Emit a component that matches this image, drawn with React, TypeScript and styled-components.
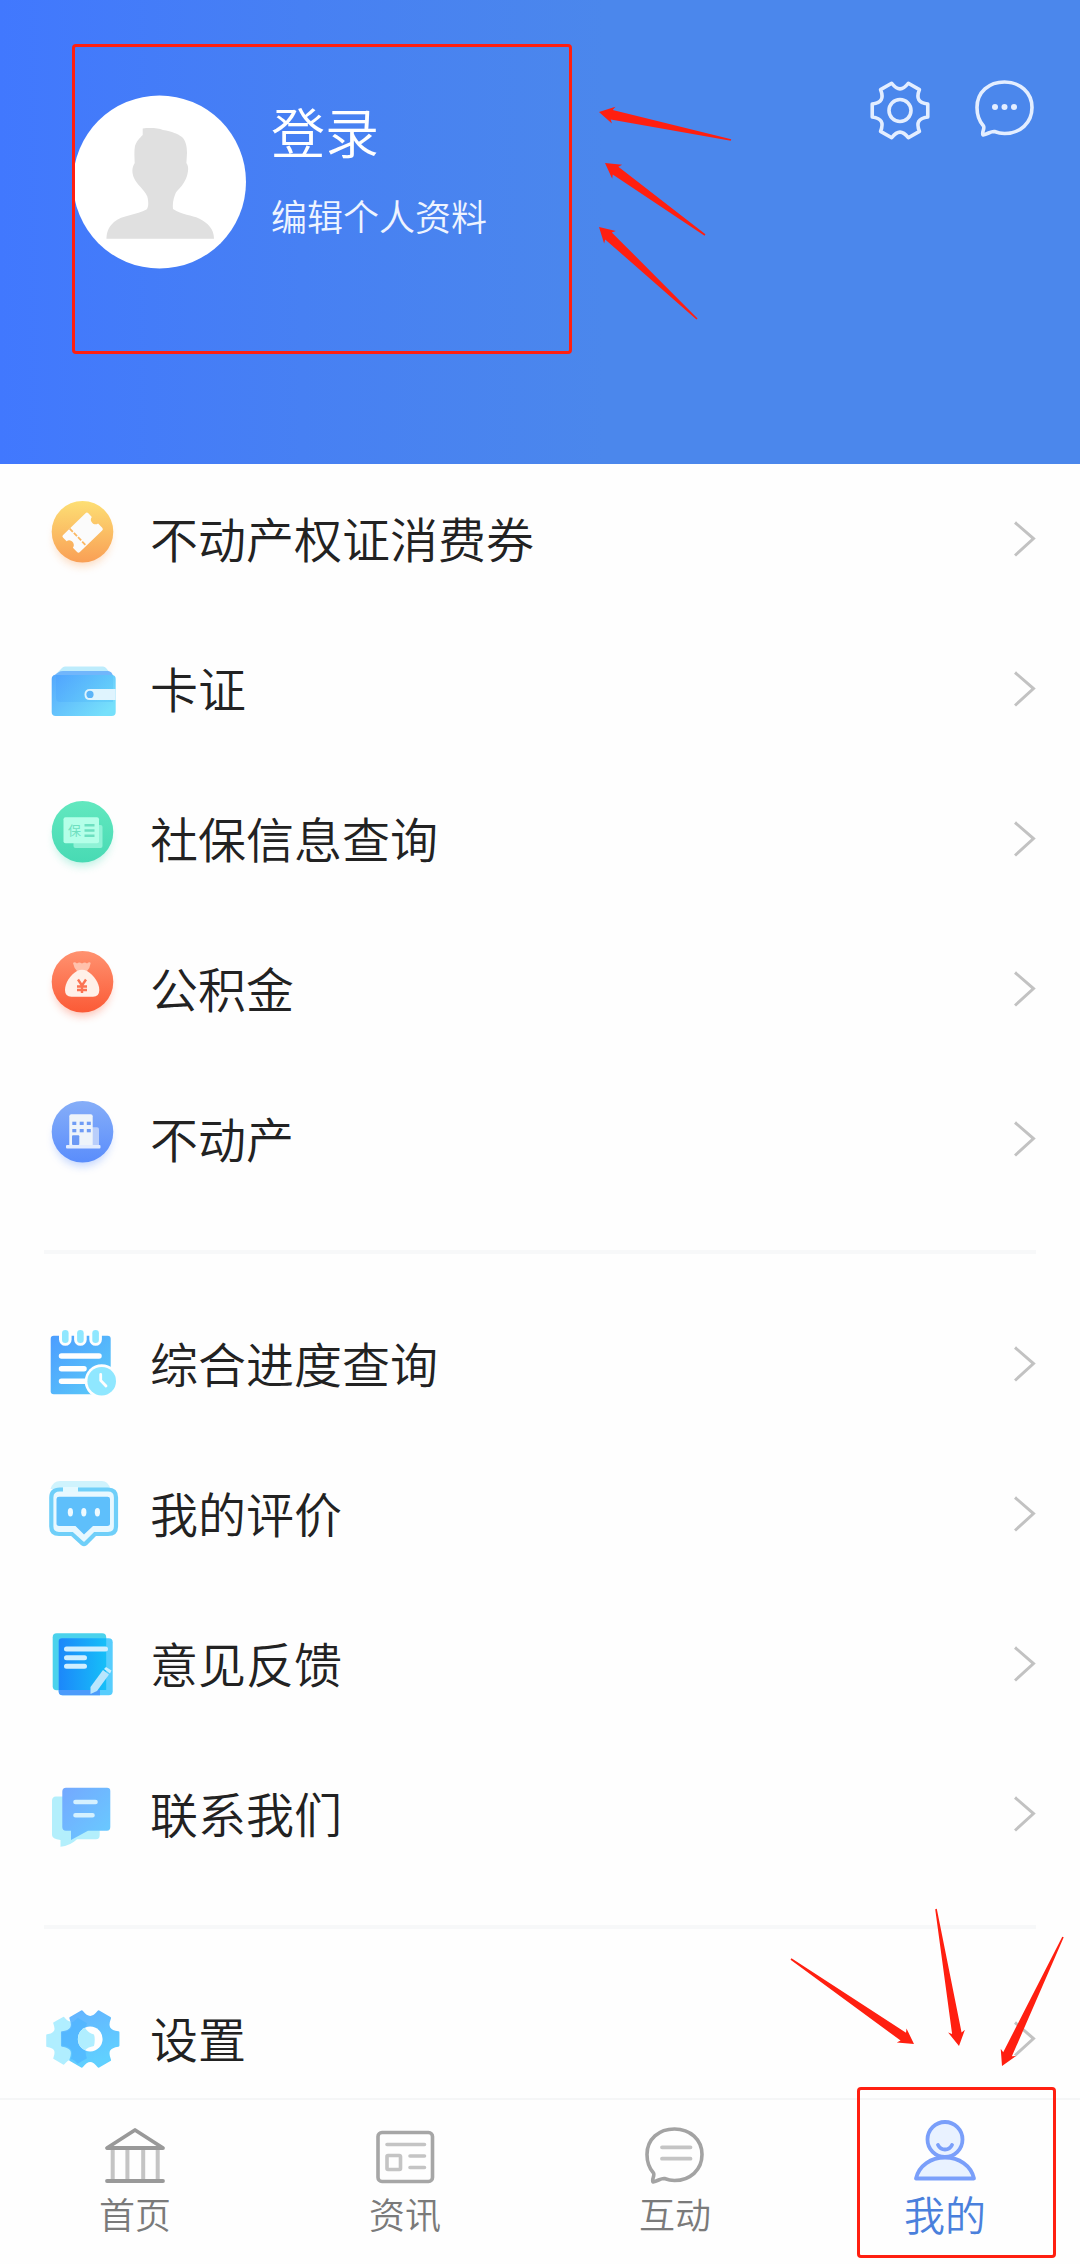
import React from "react";
import styled, { createGlobalStyle } from "styled-components";

const RED = "#ff1f10";

const GlobalStyle = createGlobalStyle`
  *, *::before, *::after { box-sizing: border-box; }
  body {
    margin: 0;
    background: #fefefe;
    font-family: "Noto Sans CJK SC", "Noto Sans", sans-serif;
    font-weight: 350;
  }
`;

const Page = styled.div`
  display: flex;
  flex-direction: column;
  height: 100vh;
  overflow: hidden;
`;

const Scroll = styled.main`
  flex: 1;
  min-height: 0;
  overflow-y: auto;
  scrollbar-width: none;
`;

const Header = styled.header`
  position: relative;
  display: flex;
  justify-content: space-between;
  align-items: flex-start;
  height: 464px;
  padding: 80px 44px 0 73px;
  background: linear-gradient(90deg, #4178fe 0%, #4780f3 28%, #4b87ec 56%, #4b87ec 100%);
`;

const ProfileButton = styled.button`
  display: flex;
  align-items: flex-start;
  gap: 24px;
  margin-top: 15px;
  padding: 0;
  border: 0;
  background: none;
  color: #fff;
  font: inherit;
  text-align: left;
`;

const ProfileText = styled.span`
  display: flex;
  flex-direction: column;
  gap: 28px;
  padding-top: 4px;
`;

const ProfileName = styled.span`
  font-size: 54px;
  line-height: 64px;
`;

const ProfileHint = styled.span`
  font-size: 36px;
  line-height: 48px;
  color: #eef4ff;
`;

const Actions = styled.div`
  display: flex;
  gap: 40px;
`;

const IconButton = styled.button`
  display: flex;
  padding: 0;
  border: 0;
  background: none;
`;

const Frame = styled.span<{ $place: "profile" | "tab" }>`
  position: absolute;
  border: 3px solid ${RED};
  border-radius: 4px;
  pointer-events: none;
  ${(p) =>
    p.$place === "profile"
      ? "left: 72px; top: 44px; width: 500px; height: 310px;"
      : "right: 24px; bottom: 6px; width: 199px; height: 171px;"}
`;

const Arrows = styled.svg<{ $place: "profile" | "tab" }>`
  position: absolute;
  pointer-events: none;
  ${(p) =>
    p.$place === "profile" ? "left: 580px; top: 100px;" : "right: 0; bottom: 184px;"}
`;

const Group = styled.ul`
  list-style: none;
  margin: 0 44px;
  padding: 0;
  & + & {
    margin-top: 35px;
    padding-top: 36px;
    border-top: 4px solid #f7f8f9;
  }
`;

const FirstGap = styled.div`
  height: 1px;
`;

const Row = styled.a`
  display: flex;
  align-items: center;
  gap: 28px;
  height: 150px;
  color: #222;
  text-decoration: none;
  font-size: 48px;
  line-height: 64px;
  & > svg { flex: none; }
`;

const RowLabel = styled.span`
  flex: 1;
  padding-bottom: 7px;
`;

const TabBar = styled.nav`
  position: relative;
  display: flex;
  flex: none;
  height: 166px;
  border-top: 2px solid #f5f6f7;
  background: #fefefe;
`;

const Tab = styled.a<{ $active?: boolean }>`
  flex: 1;
  display: flex;
  flex-direction: column;
  align-items: center;
  gap: 8px;
  padding-top: 20px;
  color: ${(p) => (p.$active ? "#4a80dc" : "#7a7a7a")};
  font-size: ${(p) => (p.$active ? 41 : 36)}px;
  line-height: 42px;
  text-decoration: none;
`;

function gearPath(cx: number, cy: number, r: number): string {
  const pt = (deg: number, k: number) => {
    const a = (deg * Math.PI) / 180;
    return `${(cx + Math.cos(a) * r * k).toFixed(2)} ${(cy + Math.sin(a) * r * k).toFixed(2)}`;
  };
  let d = `M${pt(-13, 1)}`;
  for (let i = 0; i < 6; i++) {
    const a = i * 60;
    d += `L${pt(a + 13, 1)}C${pt(a + 23, 0.7)} ${pt(a + 37, 0.7)} ${pt(a + 47, 1)}`;
  }
  return d + "Z";
}

type Point = [number, number];

function Arrow({ from, to }: { from: Point; to: Point }) {
  const dx = from[0] - to[0];
  const dy = from[1] - to[1];
  const len = Math.hypot(dx, dy);
  const angle = (Math.atan2(dy, dx) * 180) / Math.PI;
  return (
    <path
      fill={RED}
      transform={`translate(${to[0]} ${to[1]}) rotate(${angle})`}
      d={`M0 0L15 -8.5L13 -4.8L${len} -0.8V0.8L13 4.8L15 8.5Z`}
    />
  );
}

const BUBBLE =
  "M-20.5 46C-25 41 -27 35 -27 27.5C-27 12 -15 2 0.5 2C16 2 28 12.500 28 27.500C28 43 16 53.500 0.500 53.500C-4 53.500 -7 52.500 -9.500 51.500C-13 51 -16 54 -21 55C-22.500 52 -19 49 -20.500 46Z";

const Avatar = () => (
  <svg width="174" height="174" viewBox="73 95 174 174" aria-hidden="true">
    <circle cx="159.500" cy="182" r="86.500" fill="#fff" />
    <path
      fill="#e0e0e0"
      d="M142.700 128.500C150 127.500 158 128 163 130C172 131.500 178 134 182 137C186 141 187 147 187 153L186.400 163C188 165 188.500 168 188 171C187.500 175 186.500 178 184.500 181.500C181 188 177 190 175.300 194C173 199 172.500 205 173 209C182 215 192 215 199 218.500C208 223 214 229 214 238.700H106.400C107 229 110 226 114 222C122 215 137 215 146.500 209.500C149 207 148.500 201 147.300 196.500C144 189 137 185 134 178C132 173 131.500 168 134.700 163C134.500 157 134 151 135 146C137 140 140 138 142.700 135Z"
    />
  </svg>
);

const HeaderGear = () => (
  <svg width="64" height="64" viewBox="868 80 64 64" fill="none" stroke="#e4eeff" strokeWidth="3.600" strokeLinejoin="round" aria-hidden="true">
    <path d={gearPath(900, 110.5, 28.5)} />
    <circle cx="900" cy="110.500" r="11" />
  </svg>
);

const HeaderBubble = () => (
  <svg width="64" height="64" viewBox="-32 0 64 64" aria-hidden="true">
    <path d={BUBBLE} fill="none" stroke="#e4eeff" strokeWidth="3.600" strokeLinejoin="round" />
    {[-9, 0.5, 10].map((x) => (
      <circle key={x} cx={x} cy="27" r="3" fill="#e4eeff" />
    ))}
  </svg>
);

const Chevron = () => (
  <svg width="22" height="38" viewBox="0 0 22 38" aria-hidden="true">
    <path d="M1 1.500L19.500 17.500L1 34.500" fill="none" stroke="#c2c2c2" strokeWidth="3" />
  </svg>
);

/* Row icons share a canvas whose vertical origin is the middle of the row. */
const RowIcon = ({ children }: { children: React.ReactNode }) => (
  <svg width="78" height="96" viewBox="44 -48 78 96" aria-hidden="true">
    {children}
  </svg>
);

function Disc({ id, from, to, children }: { id: string; from: string; to: string; children: React.ReactNode }) {
  return (
    <RowIcon>
      <defs>
        <linearGradient id={id} x1="0" y1="0" x2="0" y2="1">
          <stop offset="0" stopColor={from} />
          <stop offset="1" stopColor={to} />
        </linearGradient>
        <filter id={`${id}-shadow`} x="-30%" y="-30%" width="160%" height="160%">
          <feGaussianBlur stdDeviation="4" />
        </filter>
      </defs>
      <circle cx="82.500" cy="-1.500" r="28" fill={to} opacity="0.350" filter={`url(#${id}-shadow)`} />
      <circle cx="82.500" cy="-8.300" r="30.800" fill={`url(#${id})`} />
      {children}
    </RowIcon>
  );
}

const CouponIcon = () => (
  <Disc id="coupon" from="#fddf74" to="#f99f55">
    <g transform="translate(82.700 -7.300) rotate(-44)">
      <path
        fill="#fbfbfb"
        d="M-16 -12H15.500Q17.500 -12 17.500 -10V-5C12.500 -4.500 12.500 3.500 17.500 4V10Q17.500 12 15.500 12H-15.500Q-17.500 12 -17.500 10V4C-12.500 3.500 -12.500 -4.500 -17.500 -5V-10Q-17.500 -12 -16 -12Z"
      />
      <path d="M-6.500 -12V12" stroke="#fbb862" strokeWidth="1.800" strokeDasharray="4.500 1.500" />
    </g>
  </Disc>
);

const WalletIcon = () => (
  <RowIcon>
    <defs>
      <linearGradient id="wallet" x1="0" y1="0" x2="1" y2="0.700">
        <stop offset="0" stopColor="#55a8fd" />
        <stop offset="1" stopColor="#76e0fb" />
      </linearGradient>
      <linearGradient id="wallet-back" x1="0" y1="0" x2="1" y2="0.400">
        <stop offset="0" stopColor="#4fa3ff" />
        <stop offset="1" stopColor="#5fcaf9" />
      </linearGradient>
    </defs>
    <path d="M56 -16L62 -22Q63 -23.500 65 -23.500H103Q105 -23.500 106 -22L111 -16Z" fill="#bdecfc" />
    <path d="M53 -14L59 -18Q60 -19 63 -19H108Q112 -19 113.500 -13Z" fill="#71b6fb" />
    <rect x="51.700" y="-15" width="64" height="41" rx="4" fill="url(#wallet)" />
    <path d="M56 -15H113V12H60Q56 12 56 8Z" fill="url(#wallet-back)" opacity="0.700" />
    <path d="M115.700 -1H90Q84.500 -1 84.500 4.500Q84.500 10 90 10H115.700Z" fill="#dff4fe" />
    <circle cx="90" cy="4.400" r="3.600" fill="#5bb4f8" />
  </RowIcon>
);

const InsuranceIcon = () => (
  <Disc id="insurance" from="#62e8bf" to="#48dab4">
    <rect x="73.500" y="-15" width="29" height="23" rx="2" fill="#8ff2d6" />
    <rect x="63.500" y="-22.700" width="35.500" height="26" rx="2" fill="#b4ffe8" />
    <text x="74.500" y="-5" fontSize="13" fontWeight="400" textAnchor="middle" fill="#6fe0c0">保</text>
    <path d="M84.500 -14.700H94.500M84.500 -9.500H94.500M84.500 -4.300H94.500" stroke="#6ce0c0" strokeWidth="2.600" />
  </Disc>
);

const FundIcon = () => (
  <Disc id="fund" from="#ff9270" to="#fb5a36">
    <path d="M73 -27Q74.500 -28.500 77 -26.500Q79 -28.500 82 -26.500Q85 -28.500 87 -26.500Q89.500 -28.500 90.700 -27Q90 -22 87 -19H77Q74 -22 73 -27Z" fill="#ffc1ac" />
    <path d="M77 -19Q82 -21.500 87 -19C94 -15 99.300 -7 99.300 0Q99.300 6.700 93 6.700H71.500Q65 6.700 65 0C65 -7 70 -15 77 -19Z" fill="#fff0e8" />
    <path d="M78 -10.500L82 -4.500L86 -10.500M82 -4.500V3M77 -3.500H87M77 0H87" fill="none" stroke="#fb7352" strokeWidth="2.400" />
  </Disc>
);

const EstateIcon = () => (
  <Disc id="estate" from="#86aef8" to="#5a8dfc">
    <path d="M92 -12.700H97Q99 -12.700 99 -10.700V6H92Z" fill="#b9cefb" />
    <path d="M71.300 -25.700H90.700Q92.700 -25.700 92.700 -23.700V6H69.300V-23.700Q69.300 -25.700 71.300 -25.700Z" fill="#eef4fa" />
    <rect x="66" y="5" width="34.500" height="3.500" rx="1" fill="#e2ecff" />
    {[-18.3, -11].map((y) =>
      [72.3, 79.7, 86.8].map((x) => <rect key={`${x}${y}`} x={x} y={y} width="4" height="3.300" fill="#6f9cf5" />)
    )}
    <rect x="72" y="-4.700" width="7.300" height="9.700" rx="1" fill="#6c99f5" />
  </Disc>
);

const ProgressIcon = () => (
  <RowIcon>
    <defs>
      <linearGradient id="progress" x1="0" y1="0" x2="1" y2="1">
        <stop offset="0" stopColor="#4c9dff" />
        <stop offset="1" stopColor="#5ccdf8" />
      </linearGradient>
    </defs>
    <rect x="50.700" y="-29.300" width="60" height="58.500" rx="3" fill="url(#progress)" />
    {[65.3, 80.4, 95.6].map((x) => (
      <React.Fragment key={x}>
        <path d={`M${x - 6.3} -31V-25.500A6.300 6.300 0 0 0 ${x + 6.3} -25.500V-31Z`} fill="#fefefe" />
        <rect x={x - 3.3} y="-35" width="6.600" height="13" rx="3.300" fill="#8fe7ff" />
      </React.Fragment>
    ))}
    <path d="M61.500 -9H99M61.500 3.700H84M61.500 16.300H86" stroke="#fefefe" strokeWidth="5.500" strokeLinecap="round" />
    <circle cx="101.700" cy="16.200" r="17" fill="#fefefe" />
    <circle cx="101.700" cy="16.200" r="14.300" fill="#8fe7ff" />
    <path d="M100.700 9.500V15.500L106 21" fill="none" stroke="#fefefe" strokeWidth="2.800" strokeLinecap="round" />
  </RowIcon>
);

const ReviewIcon = () => (
  <RowIcon>
    <path d="M50.500 -26Q53 -34 60 -34H102Q108 -34 110.500 -26Z" fill="#cff3fd" />
    <path
      d="M60 -25.500Q51.300 -25.500 51.300 -17.500V11.500Q51.300 19 59 19H72L82.500 28.500Q84 29.500 85.500 28.500L95 19H108Q116 19 116 11.500V-17.500Q116 -25.500 108 -25.500Z"
      fill="#e8f8ff"
      stroke="#6fcff9"
      strokeWidth="4.200"
    />
    <path d="M63 -25.500H78" stroke="#e4f9ff" strokeWidth="5" />
    <path d="M59 -18.300H107.500Q110 -18.300 110 -16V8.500Q110 11 107.500 11H93L84 19.500L75.500 11H59Q56.500 11 56.500 8.500V-16Q56.500 -18.300 59 -18.300Z" fill="#5ebffb" />
    {[70.4, 83.8, 97.4].map((x) => (
      <ellipse key={x} cx={x} cy="-2.700" rx="2.600" ry="4.200" fill="#eefaff" />
    ))}
  </RowIcon>
);

const FeedbackIcon = () => (
  <RowIcon>
    <defs>
      <linearGradient id="feedback" x1="0" y1="0" x2="1" y2="0">
        <stop offset="0" stopColor="#1c87fa" />
        <stop offset="1" stopColor="#16bff8" />
      </linearGradient>
    </defs>
    <rect x="52.700" y="-31.700" width="53.500" height="57" rx="4" fill="#4bd2ec" />
    <rect x="58.700" y="-26.700" width="54" height="57" rx="4" fill="#56cdfd" />
    <path d="M62 -26.700H106.200V25H58.700V-23.500Q58.700 -26.700 62 -26.700Z" fill="url(#feedback)" />
    <path d="M58.700 25H100V30.300H62.500Q58.700 30.300 58.700 26.500Z" fill="#4c9bfb" />
    <path d="M66.500 -16H105.500M66.500 -7.300H84.500M66.500 1.300H84.500" stroke="#cfeeff" strokeWidth="5" strokeLinecap="round" />
    <path d="M90.500 22L103 5L109 9.500L97 26L90.500 29Z" fill="#b9e6fd" />
    <path d="M104 4L106 2L111.500 5.500L110 8.500Z" fill="#c9efff" />
  </RowIcon>
);

const ContactIcon = () => (
  <RowIcon>
    <defs>
      <linearGradient id="contact" x1="0" y1="0" x2="1" y2="1">
        <stop offset="0" stopColor="#74a8ff" />
        <stop offset="1" stopColor="#68ccff" />
      </linearGradient>
    </defs>
    <path d="M56 -18.500H96Q99.700 -18.500 99.700 -15V20Q99.700 24.300 96 24.300H77Q70 31 60.500 31.700V25Q52 24 52 20V-14Q52 -18.500 56 -18.500Z" fill="#b3effc" />
    <path d="M66 -27.300H107Q110.300 -27.300 110.300 -24V12Q110.300 15.700 107 15.700H88L71 25V15.700H66Q62.300 15.700 62.300 12V-23.500Q62.300 -27.300 66 -27.300Z" fill="url(#contact)" />
    <path d="M75.500 -13H95.500M75.500 0.300H92.500" stroke="#d5f1ff" strokeWidth="4.600" strokeLinecap="round" />
  </RowIcon>
);

const SettingsIcon = () => (
  <RowIcon>
    <defs>
      <linearGradient id="settings" x1="0" y1="0" x2="0.400" y2="1">
        <stop offset="0" stopColor="#64b2ff" />
        <stop offset="1" stopColor="#60d0ff" />
      </linearGradient>
      <clipPath id="settings-overlap">
        <path d={gearPath(90.2, -1, 29)} />
      </clipPath>
    </defs>
    <path d={gearPath(70.6, 0.7, 24)} fill="#b0eeff" stroke="#b0eeff" strokeWidth="2" strokeLinejoin="round" />
    <path d={gearPath(90.2, -1, 28.8)} fill="url(#settings)" stroke="url(#settings)" strokeWidth="2.400" strokeLinejoin="round" />
    <path d={gearPath(70.6, 0.7, 24)} fill="#4db4ff" opacity="0.650" clipPath="url(#settings-overlap)" />
    <circle cx="90.200" cy="-1" r="12.400" fill="#fefefe" />
    <path d="M85 10.200A12.400 12.400 0 0 1 85 -12.200Q88 -7 94 -5.500Q95.500 -1 94 6Q88 7 85 10.200Z" fill="#b0eeff" />
  </RowIcon>
);

const TabIcon = ({ children }: { children: React.ReactNode }) => (
  <svg width="64" height="64" viewBox="-32 0 64 64" fill="none" strokeLinejoin="round" strokeLinecap="round" aria-hidden="true">
    {children}
  </svg>
);

const HomeTabIcon = () => (
  <TabIcon>
    <path d="M-22.300 30V60M-7.600 30V60M8.200 30V60M22.700 30V60" stroke="#c4c4c4" strokeWidth="4" />
    <path d="M-28 28H28L0 10Z" stroke="#999" strokeWidth="3.800" />
    <path d="M-28 61H28" stroke="#999" strokeWidth="3.800" />
  </TabIcon>
);

const NewsTabIcon = () => (
  <TabIcon>
    <rect x="-27" y="12.500" width="54.500" height="49" rx="4" stroke="#a6a6a6" strokeWidth="3.600" />
    <path d="M-18 24.500H19.500M5 36H19.500M5 47.500H19.500" stroke="#c4c4c4" strokeWidth="3.600" />
    <rect x="-18" y="35.500" width="13.500" height="14" rx="1" stroke="#c4c4c4" strokeWidth="3.600" />
  </TabIcon>
);

const ChatTabIcon = () => (
  <TabIcon>
    <path d={BUBBLE} transform="translate(-1 7)" stroke="#a3a3a3" strokeWidth="3.600" />
    <path d="M-13 27.300H15.500M-13 38.700H15.500" stroke="#c4c4c4" strokeWidth="3.800" />
  </TabIcon>
);

const MineTabIcon = () => (
  <TabIcon>
    <g fill="#e9f2ff" stroke="#7a9ffa" strokeWidth="3.800">
      <circle cx="0" cy="19.500" r="17.500" />
      <path d="M-29 58.500C-26 45.500 -14 37.500 0 37.500S26 45.500 29 58.500Z" />
    </g>
    <path d="M-7 25C-4 31 4 31 7 25" stroke="#7a9ffa" strokeWidth="3.800" />
  </TabIcon>
);

const groups = [
  [
    { label: "不动产权证消费券", Icon: CouponIcon },
    { label: "卡证", Icon: WalletIcon },
    { label: "社保信息查询", Icon: InsuranceIcon },
    { label: "公积金", Icon: FundIcon },
    { label: "不动产", Icon: EstateIcon },
  ],
  [
    { label: "综合进度查询", Icon: ProgressIcon },
    { label: "我的评价", Icon: ReviewIcon },
    { label: "意见反馈", Icon: FeedbackIcon },
    { label: "联系我们", Icon: ContactIcon },
  ],
  [{ label: "设置", Icon: SettingsIcon }],
];

const tabs = [
  { label: "首页", Icon: HomeTabIcon },
  { label: "资讯", Icon: NewsTabIcon },
  { label: "互动", Icon: ChatTabIcon },
  { label: "我的", Icon: MineTabIcon, active: true },
];

export default function App() {
  return (
    <Page>
      <GlobalStyle />
      <Scroll>
        <Header>
          <ProfileButton type="button">
            <Avatar />
            <ProfileText>
              <ProfileName>登录</ProfileName>
              <ProfileHint>编辑个人资料</ProfileHint>
            </ProfileText>
          </ProfileButton>
          <Actions>
            <IconButton type="button" aria-label="设置">
              <HeaderGear />
            </IconButton>
            <IconButton type="button" aria-label="消息">
              <HeaderBubble />
            </IconButton>
          </Actions>
          <Frame $place="profile" />
          <Arrows $place="profile" width="160" height="230" viewBox="580 100 160 230" aria-hidden="true">
            <Arrow from={[731, 140]} to={[599, 112]} />
            <Arrow from={[705, 235]} to={[605, 163]} />
            <Arrow from={[697, 319]} to={[599, 227]} />
          </Arrows>
        </Header>
        <FirstGap />
        {groups.map((rows, i) => (
          <Group key={i}>
            {rows.map(({ label, Icon }) => (
              <li key={label}>
                <Row href="#">
                  <Icon />
                  <RowLabel>{label}</RowLabel>
                  <Chevron />
                </Row>
              </li>
            ))}
          </Group>
        ))}
      </Scroll>
      <TabBar>
        {tabs.map(({ label, Icon, active }) => (
          <Tab key={label} href="#" $active={active} aria-current={active ? "page" : undefined}>
            <Icon />
            {label}
          </Tab>
        ))}
        <Frame $place="tab" />
        <Arrows $place="tab" width="300" height="180" viewBox="780 1900 300 180" aria-hidden="true">
          <Arrow from={[791, 1959]} to={[914, 2044]} />
          <Arrow from={[936, 1909]} to={[959, 2046]} />
          <Arrow from={[1063, 1937]} to={[1002, 2066]} />
        </Arrows>
      </TabBar>
    </Page>
  );
}
